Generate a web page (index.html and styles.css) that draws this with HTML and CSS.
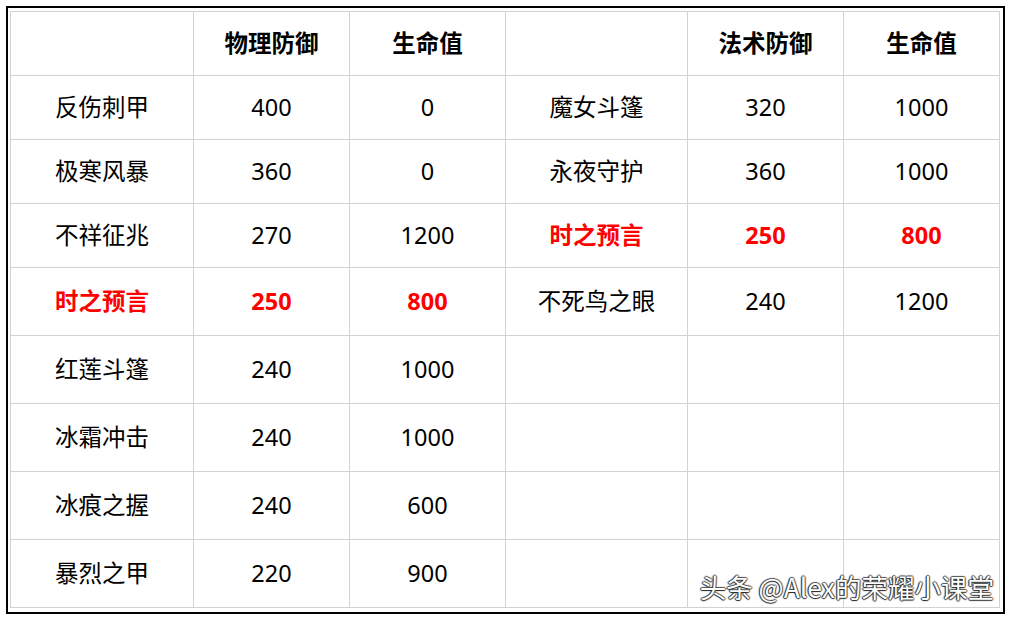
FILE: index.html
```html
<!DOCTYPE html>
<html lang="zh-CN">
<head>
<meta charset="utf-8">
<title>装备对比</title>
<link rel="stylesheet" href="styles.css">
</head>
<body>
<div class="frame">
  <div class="grid">
    <div class="cell"></div>
    <div class="cell head">物理防御</div>
    <div class="cell head">生命值</div>
    <div class="cell"></div>
    <div class="cell head">法术防御</div>
    <div class="cell head">生命值</div>

    <div class="cell">反伤刺甲</div>
    <div class="cell">400</div>
    <div class="cell">0</div>
    <div class="cell">魔女斗篷</div>
    <div class="cell">320</div>
    <div class="cell">1000</div>

    <div class="cell">极寒风暴</div>
    <div class="cell">360</div>
    <div class="cell">0</div>
    <div class="cell">永夜守护</div>
    <div class="cell">360</div>
    <div class="cell">1000</div>

    <div class="cell">不祥征兆</div>
    <div class="cell">270</div>
    <div class="cell">1200</div>
    <div class="cell hl">时之预言</div>
    <div class="cell hl">250</div>
    <div class="cell hl">800</div>

    <div class="cell hl">时之预言</div>
    <div class="cell hl">250</div>
    <div class="cell hl">800</div>
    <div class="cell">不死鸟之眼</div>
    <div class="cell">240</div>
    <div class="cell">1200</div>

    <div class="cell">红莲斗篷</div>
    <div class="cell">240</div>
    <div class="cell">1000</div>
    <div class="cell"></div>
    <div class="cell"></div>
    <div class="cell"></div>

    <div class="cell">冰霜冲击</div>
    <div class="cell">240</div>
    <div class="cell">1000</div>
    <div class="cell"></div>
    <div class="cell"></div>
    <div class="cell"></div>

    <div class="cell">冰痕之握</div>
    <div class="cell">240</div>
    <div class="cell">600</div>
    <div class="cell"></div>
    <div class="cell"></div>
    <div class="cell"></div>

    <div class="cell">暴烈之甲</div>
    <div class="cell">220</div>
    <div class="cell">900</div>
    <div class="cell"></div>
    <div class="cell"></div>
    <div class="cell"></div>
  </div>
  <div class="watermark">头条 @Alex的荣耀小课堂</div>
</div>
</body>
</html>
```

FILE: styles.css
```css
html, body {
  margin: 0;
  padding: 0;
  background: #ffffff;
}

body {
  padding: 6px 0 0 6px;
  font-family: "Noto Sans", "Noto Sans CJK SC", sans-serif;
  color: #000000;
}

.frame {
  position: relative;
  box-sizing: border-box;
  width: 999px;
  height: 608px;
  border: 2px solid #000000;
  padding: 3px 0 0 2px;
  background: #ffffff;
}

.grid {
  display: grid;
  grid-template-columns: 182px 155px 155px 181px 155px 155px;
  grid-template-rows: 63px 63px 63px 63px 67px 67px 67px 67px 67px;
  gap: 1px;
  padding: 1px;
  background: #d2d2d2;
  width: max-content;
}

.cell {
  background: #ffffff;
  display: flex;
  align-items: center;
  justify-content: center;
  font-size: 23.5px;
  line-height: 1;
  white-space: nowrap;
}

.head {
  font-weight: 700;
}

.hl {
  font-weight: 700;
  color: #ff0000;
}

.watermark {
  position: absolute;
  right: 9px;
  bottom: 12px;
  font-family: "Noto Sans CJK SC", sans-serif;
  font-size: 26.5px;
  line-height: 1;
  color: #ffffff;
  text-shadow: -1px 0 1px #222, 0 1px 1px #222, 1px 0 1px #555, 0 -1px 1px #555;
  white-space: nowrap;
}
```
